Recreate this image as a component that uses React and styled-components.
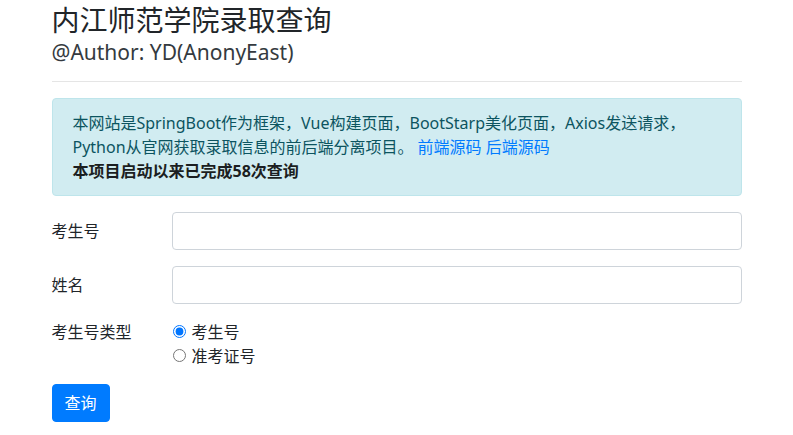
import React from "react";
import styled, { createGlobalStyle } from "styled-components";

const GlobalStyle = createGlobalStyle`
  html, body { margin: 0; padding: 0; background: #fff; }
  body {
    font-family: "Noto Sans", "Noto Sans CJK SC", sans-serif;
    font-size: 16px;
    line-height: 1.5;
    color: #212529;
  }
  * { box-sizing: border-box; }
`;

const Container = styled.div`
  max-width: 720px;
  margin: 0 auto;
  padding: 4px 15px 0;
`;

const Title = styled.h3`
  margin: 0;
  font-size: 28px;
  font-weight: 400;
  line-height: 1.2;
`;

const Author = styled.h5`
  margin: 2px 0 0;
  font-size: 21px;
  font-weight: 400;
  line-height: 1.2;
  color: #343a40;
`;

const Divider = styled.hr`
  margin: 16px 0;
  border: 0;
  border-top: 1px solid rgba(0, 0, 0, 0.1);
`;

const Alert = styled.div`
  padding: 12px 20px;
  border: 1px solid #bee5eb;
  border-radius: 4px;
  background: #d1ecf1;
  color: #0c5460;
  margin-bottom: 16px;
  line-height: 24px;
`;

const Link = styled.a`
  color: #007bff;
  text-decoration: none;
  margin-left: ${(p) => p.$gap || 0}px;
`;

const Strong = styled.b`
  font-weight: 700;
  color: #1b1e21;
`;

const FormRow = styled.div`
  display: grid;
  grid-template-columns: 120px 1fr;
  align-items: ${(p) => (p.$top ? "start" : "center")};
  margin-bottom: 16px;
`;

const Label = styled.label`
  line-height: 24px;
  padding: ${(p) => (p.$top ? "0" : "7px 0")};
`;

const Input = styled.input`
  display: block;
  width: 100%;
  height: 38px;
  padding: 6px 12px;
  font: inherit;
  color: #495057;
  background: #fff;
  border: 1px solid #ced4da;
  border-radius: 4px;
  outline: none;
`;

const RadioList = styled.div`
  display: flex;
  flex-direction: column;
`;

const RadioItem = styled.label`
  display: flex;
  align-items: center;
  height: 24px;
  gap: 6px;
  input { margin: 0 0 0 1px; width: 13px; height: 13px; }
`;

const Button = styled.button`
  display: inline-block;
  font: inherit;
  line-height: 24px;
  padding: 6px 12px;
  color: #fff;
  background: #007bff;
  border: 1px solid #007bff;
  border-radius: 4px;
`;

export default function App() {
  return (
    <>
      <GlobalStyle />
      <Container>
        <Title>内江师范学院录取查询</Title>
        <Author>@Author: YD(AnonyEast)</Author>
        <Divider />
        <Alert>
          本网站是SpringBoot作为框架，Vue构建页面，BootStarp美化页面，Axios发送请求，
          <br />
          Python从官网获取录取信息的前后端分离项目。
          <Link href="#" $gap={4}>前端源码</Link> <Link href="#">后端源码</Link>
          <br />
          <Strong>本项目启动以来已完成58次查询</Strong>
        </Alert>
        <FormRow>
          <Label htmlFor="ksh">考生号</Label>
          <Input id="ksh" type="text" />
        </FormRow>
        <FormRow>
          <Label htmlFor="xm">姓名</Label>
          <Input id="xm" type="text" />
        </FormRow>
        <FormRow $top>
          <Label $top>考生号类型</Label>
          <RadioList>
            <RadioItem>
              <input type="radio" name="type" defaultChecked />
              考生号
            </RadioItem>
            <RadioItem>
              <input type="radio" name="type" />
              准考证号
            </RadioItem>
          </RadioList>
        </FormRow>
        <Button type="button">查询</Button>
      </Container>
    </>
  );
}
